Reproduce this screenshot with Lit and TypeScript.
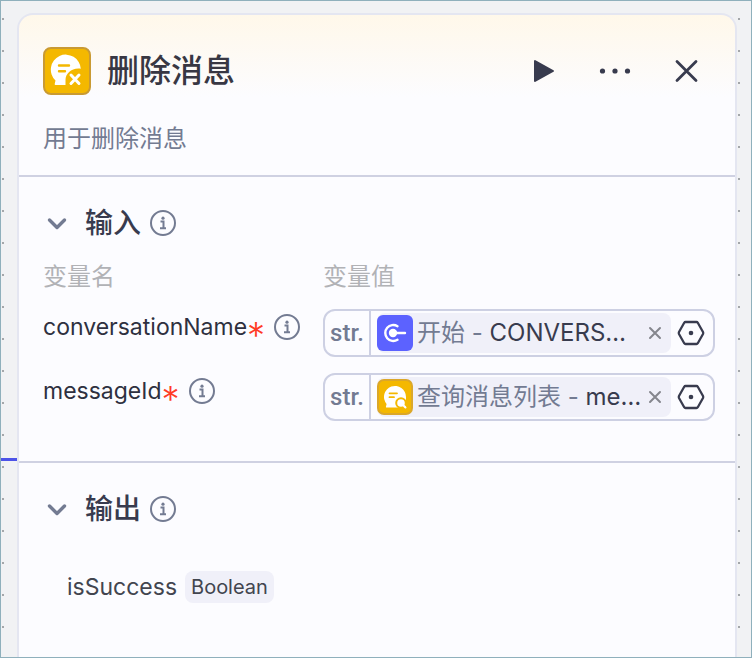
import { LitElement, html, css } from "lit";
import { customElement, state } from "lit/decorators.js";

const deleteIcon = html`<svg viewBox="0 0 48 48" aria-hidden="true">
  <rect x="1" y="1" width="46" height="46" rx="7" fill="#f4b800" stroke="#c99a33" stroke-width="2"/>
  <path fill="#fff" d="M12.500 38C12 38 11.500 37.500 11.700 37L12.500 33.500A15 15 0 1 1 37.800 21.800C29 20.500 22.500 26.500 22.500 33V38Z"/>
  <path d="M16 18.500H26M16 24.300H22" stroke="#f4b800" stroke-width="2.400" stroke-linecap="round"/>
  <path d="M28 28L36 36.500M36 28L28 36.500" stroke="#fff" stroke-width="3" stroke-linecap="round"/>
</svg>`;

const queryIcon = html`<svg viewBox="0 0 36 36" aria-hidden="true">
  <rect x="1" y="1" width="34" height="34" rx="6" fill="#f4b800" stroke="#dba72a" stroke-width="2"/>
  <path fill="#fff" d="M9.500 28.500C9 28.500 8.800 28 9 27.600L9.600 25A11 11 0 1 1 29 18V28.500Z"/>
  <path d="M12.500 14.300H20M12.500 18.200H17" stroke="#f4b800" stroke-width="1.800" stroke-linecap="round"/>
  <circle cx="24" cy="24" r="4.800" fill="#fff" stroke="#f4b800" stroke-width="2"/>
  <path d="M26.800 26.800L28.500 28.500" stroke="#fff" stroke-width="2" stroke-linecap="round"/>
</svg>`;

const startIcon = html`<svg viewBox="0 0 36 36" aria-hidden="true">
  <rect width="36" height="36" rx="6" fill="#5c62ff"/>
  <path d="M20.500 11.200A8 8 0 1 0 20.500 24.800" fill="none" stroke="#fff" stroke-width="2.400" stroke-linecap="round"/>
  <circle cx="16" cy="18" r="4.200" fill="#fff"/>
  <path d="M16 18H28" stroke="#fff" stroke-width="2.400" stroke-linecap="round"/>
</svg>`;

const infoIcon = html`<svg viewBox="0 0 28 28" aria-hidden="true" fill="none" stroke="#737b92" stroke-width="2">
  <circle cx="14" cy="14" r="12"/>
  <path d="M11.500 12.500H14.500V19M11 19.300H17"/>
  <circle cx="14" cy="9.200" r="1.600" fill="#737b92" stroke="none"/>
</svg>`;

const chevron = html`<svg viewBox="0 0 24 24" aria-hidden="true" fill="none" stroke="#737b92" stroke-width="3.400" stroke-linecap="round" stroke-linejoin="round">
  <path d="M4.500 9L12 16.500L19.500 9"/>
</svg>`;

const hexagon = html`<svg viewBox="0 0 28 28" aria-hidden="true">
  <path d="M8.500 3H19.500Q20.300 3 20.800 3.800L26 13Q26.500 14 26 15L20.800 24.200Q20.300 25 19.500 25H8.500Q7.700 25 7.200 24.200L2 15Q1.500 14 2 13L7.200 3.800Q7.700 3 8.500 3Z" fill="none" stroke="#383b4e" stroke-width="2.300"/>
  <circle cx="14" cy="14" r="2.300" fill="#383b4e"/>
</svg>`;

const inputs = [
  { id: "conversationName", icon: startIcon, node: "开始", value: "CONVERS…" },
  { id: "messageId", icon: queryIcon, node: "查询消息列表", value: "me…" },
];

@customElement("app-root")
export class AppRoot extends LitElement {
  @state() private inputOpen = true;
  @state() private outputOpen = true;

  static styles = css`
    :host {
      display: block;
      font-family: Inter, "Noto Sans CJK SC", sans-serif;
      font-size: 24px;
      line-height: 32px;
      color: #2e3040;
    }
    * { box-sizing: border-box; }
    button {
      font: inherit;
      color: inherit;
      background: none;
      border: 0;
      padding: 0;
      display: flex;
      align-items: center;
      justify-content: center;
      cursor: pointer;
      flex: none;
    }
    svg { display: block; width: 100%; height: 100%; }
    h1, h2, p { margin: 0; }
    .canvas {
      position: relative;
      display: flex;
      min-height: 100vh;
      padding: 12px 14px 0 16px;
      border: 1px solid #8fb0bc;
      background: radial-gradient(circle at 1px 1px, #a4a7aa 0, #a4a7aa 1px, transparent 1px) 1px 17px / 32px 32px #f1f2f4;
    }
    .edge {
      position: absolute;
      left: 0;
      top: 457px;
      width: 16px;
      height: 3px;
      background: #4d53e8;
    }
    .panel {
      flex: 1;
      min-width: 0;
      border: 2px solid #e4e6f1;
      border-bottom: 0;
      border-radius: 16px 16px 0 0;
      background: linear-gradient(#fff8ea, #fcfcff 82px) #fcfcff;
    }
    .head { padding: 32px 24px 20px; border-bottom: 2px solid #cfd1e2; }
    .bar { display: flex; align-items: center; gap: 24px; }
    .logo { width: 48px; height: 48px; flex: none; }
    .name { display: flex; flex: 1; align-items: center; gap: 16px; min-width: 0; }
    .title { font-size: 32px; line-height: 48px; font-weight: 500; color: #383743; }
    .tool { width: 48px; height: 48px; }
    .desc { margin-top: 28px; color: #737b92; }
    .section { padding: 28px 20px 40px 24px; }
    .section + .section { border-top: 2px solid #cfd1e2; }
    .heading { display: flex; align-items: center; height: 36px; }
    .toggle { width: 28px; height: 36px; }
    .arrow { width: 24px; height: 24px; }
    .subtitle { margin: 0 8px 0 14px; font-size: 28px; line-height: 36px; font-weight: 500; color: #383b4e; }
    .info { width: 28px; height: 28px; }
    .params { width: 100%; margin-top: 20px; border-collapse: collapse; table-layout: fixed; }
    th { padding: 0; text-align: left; font-weight: 400; color: #b1b2b6; }
    .key { width: 280px; }
    td { padding: 16px 0 0; vertical-align: top; }
    .label { display: flex; align-items: center; height: 36px; font-size: 23px; }
    .star { font-size: 36px; line-height: 16px; font-weight: 300; vertical-align: -13px; color: #ff3b26; }
    .label .info { margin-left: 8px; }
    .field {
      display: flex;
      align-items: center;
      height: 48px;
      border: 2px solid #cdd0e3;
      border-radius: 12px;
    }
    .type {
      align-self: stretch;
      width: 46px;
      display: flex;
      align-items: center;
      justify-content: center;
      border-right: 2px solid #cdd0e3;
      font-family: Roboto, sans-serif;
      font-weight: 500;
      color: #737b92;
    }
    .chip {
      flex: 1;
      min-width: 0;
      display: flex;
      align-items: center;
      height: 40px;
      margin: 0 4px 0 6px;
      border-radius: 8px;
      background: #f0f0f9;
      white-space: nowrap;
    }
    .node { width: 36px; height: 36px; margin-right: 4px; flex: none; }
    .ref { flex: 1; min-width: 0; color: #737b92; }
    .value { color: #383b4e; }
    .clear { width: 32px; height: 32px; }
    .pick { width: 32px; height: 32px; margin-right: 6px; }
    .hex { width: 28px; height: 28px; }
    .result { display: flex; align-items: center; gap: 8px; margin-top: 44px; padding-left: 24px; font-size: 23px; color: #42454f; }
    .tag { padding: 0 6px; border-radius: 8px; font-size: 20px; background: #f0f0f9; }
  `;

  private heading(text: string, open: boolean, flip: () => void) {
    return html`<div class="heading">
      <button class="toggle" aria-label=${text} aria-expanded=${open} @click=${flip}><span class="arrow">${chevron}</span></button>
      <h2 class="subtitle">${text}</h2>
      <button class="info" aria-label="info">${infoIcon}</button>
    </div>`;
  }

  private row(p: (typeof inputs)[number]) {
    return html`<tr>
      <td><div class="label">
        <label for=${p.id}>${p.id}<span class="star">*</span></label>
        <button class="info" aria-label="info">${infoIcon}</button>
      </div></td>
      <td><div class="field">
        <span class="type">str.</span>
        <div class="chip">
          <span class="node">${p.icon}</span>
          <span class="ref">${p.node} - <span class="value">${p.value}</span></span>
          <button class="clear" aria-label="clear"><svg viewBox="0 0 32 32"><path d="M11 11L21 21M21 11L11 21" stroke="#85868d" stroke-width="2" stroke-linecap="round"/></svg></button>
        </div>
        <button class="pick" id=${p.id}><span class="hex">${hexagon}</span></button>
      </div></td>
    </tr>`;
  }

  render() {
    return html`<div class="canvas">
      <div class="edge"></div>
      <main class="panel">
        <header class="head">
          <div class="bar">
            <div class="name"><span class="logo">${deleteIcon}</span><h1 class="title">删除消息</h1></div>
            <button class="tool" aria-label="run"><svg viewBox="0 0 48 48"><path d="M16 14V34L34 24Z" fill="#383b4e" stroke="#383b4e" stroke-width="2" stroke-linejoin="round"/></svg></button>
            <button class="tool" aria-label="more"><svg viewBox="0 0 48 48" fill="#383b4e"><circle cx="11.500" cy="24" r="2.600"/><circle cx="24" cy="24" r="2.600"/><circle cx="36.500" cy="24" r="2.600"/></svg></button>
            <button class="tool" aria-label="close"><svg viewBox="0 0 48 48"><path d="M14 14.500L33 33.500M33 14.500L14 33.500" stroke="#383b4e" stroke-width="2.800" stroke-linecap="round"/></svg></button>
          </div>
          <p class="desc">用于删除消息</p>
        </header>
        <section class="section">
          ${this.heading("输入", this.inputOpen, () => (this.inputOpen = !this.inputOpen))}
          ${this.inputOpen
            ? html`<table class="params">
                <thead><tr><th class="key">变量名</th><th>变量值</th></tr></thead>
                <tbody>${inputs.map((p) => this.row(p))}</tbody>
              </table>`
            : ""}
        </section>
        <section class="section">
          ${this.heading("输出", this.outputOpen, () => (this.outputOpen = !this.outputOpen))}
          ${this.outputOpen ? html`<div class="result"><span>isSuccess</span><span class="tag">Boolean</span></div>` : ""}
        </section>
      </main>
    </div>`;
  }
}
